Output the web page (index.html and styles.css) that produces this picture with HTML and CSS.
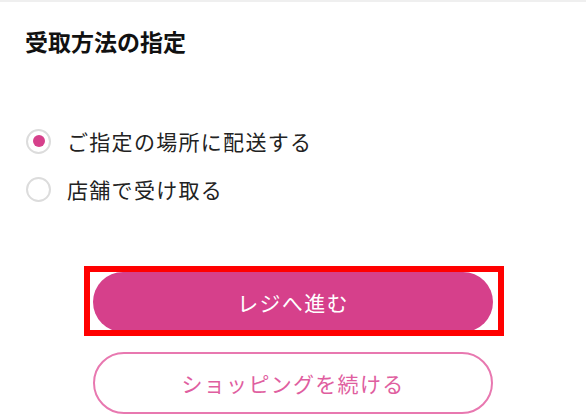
FILE: index.html
```html
<!DOCTYPE html>
<html lang="ja">
<head>
    <meta charset="UTF-8">
    <meta name="viewport" content="width=device-width, initial-scale=1.0">
    <title>受取方法の指定</title>
    <link rel="stylesheet" href="styles.css">
</head>
<body>
    <div class="top-bar"></div>

    <div class="panel">
        <h2 class="panel-title">受取方法の指定</h2>

        <div class="options">
            <label class="option">
                <input type="radio" name="receive" checked>
                <span class="radio-mark"></span>
                <span class="option-text">ご指定の場所に配送する</span>
            </label>
            <label class="option">
                <input type="radio" name="receive">
                <span class="radio-mark"></span>
                <span class="option-text">店舗で受け取る</span>
            </label>
        </div>

        <div class="actions">
            <div class="highlight-wrap">
                <button class="btn btn-primary">レジへ進む</button>
                <div class="highlight"></div>
            </div>
            <button class="btn btn-outline">ショッピングを続ける</button>
        </div>
    </div>
</body>
</html>
```

FILE: styles.css
```css
body {
    font-family: "Noto Sans CJK JP", "Noto Sans", sans-serif;
    margin: 0;
    padding: 0;
    background: #ffffff;
    color: #1a1a1a;
}
.top-bar {
    height: 2px;
    background: #efefef;
}
.panel {
    padding: 22px 25px 0 25px;
}
.panel-title {
    margin: 0;
    font-size: 23px;
    line-height: 34px;
    font-weight: bold;
    letter-spacing: 0px;
    color: #111;
}
.options {
    display: flex;
    flex-direction: column;
    gap: 12px;
    margin-top: 65px;
}
.option {
    display: flex;
    align-items: center;
    gap: 16px;
    height: 36px;
    cursor: pointer;
}
.option input {
    display: none;
}
.radio-mark {
    width: 25px;
    height: 25px;
    box-sizing: border-box;
    border: 2px solid #dcdcdc;
    border-radius: 50%;
    margin-left: 1px;
    display: flex;
    align-items: center;
    justify-content: center;
}
.option input:checked + .radio-mark::after {
    content: "";
    width: 12px;
    height: 12px;
    border-radius: 50%;
    background: #d6408b;
}
.option-text {
    font-size: 21px;
    letter-spacing: 1.3px;
    color: #222;
}
.actions {
    display: flex;
    flex-direction: column;
    align-items: center;
    gap: 20px;
    margin-top: 65px;
}
.highlight-wrap {
    position: relative;
}
.btn {
    width: 400px;
    height: 60px;
    border-radius: 30px;
    font-family: inherit;
    font-size: 21px;
    letter-spacing: 1.3px;
    cursor: pointer;
    display: block;
}
.btn-primary {
    background: #d6408b;
    color: white;
    border: none;
}
.btn-outline {
    background: white;
    color: #df5ea0;
    border: 2px solid #e878b0;
    height: 62px;
    border-radius: 31px;
}
.highlight {
    position: absolute;
    top: -6px;
    left: -9px;
    right: -11px;
    bottom: -4px;
    border: 6px solid #ff0000;
    pointer-events: none;
}
```
